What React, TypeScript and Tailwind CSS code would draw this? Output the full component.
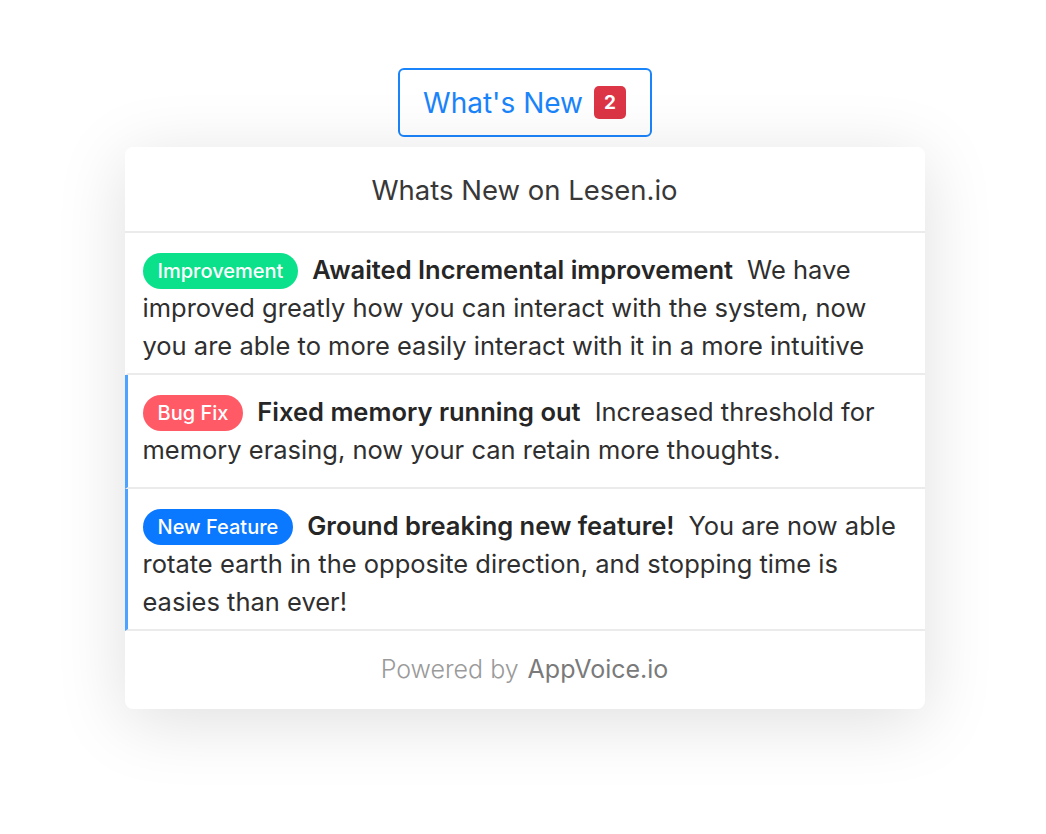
import React from 'react';

// "What's New" changelog popover

type Entry = {
  tag: string;
  tagClass: string;
  title: string;
  body: string;
  highlight: boolean;
};

const entries: Entry[] = [
  {
    tag: 'Improvement',
    tagClass: 'bg-[#0be08b]',
    title: 'Awaited Incremental improvement',
    body: 'We have improved greatly how you can interact with the system, now you are able to more easily interact with it in a more intuitive way than ever before.',
    highlight: false,
  },
  {
    tag: 'Bug Fix',
    tagClass: 'bg-[#ff5a66]',
    title: 'Fixed memory running out',
    body: 'Increased threshold for memory erasing, now your can retain more thoughts.',
    highlight: true,
  },
  {
    tag: 'New Feature',
    tagClass: 'bg-[#0a78ff]',
    title: 'Ground breaking new feature!',
    body: 'You are now able rotate earth in the opposite direction, and stopping time is easies than ever!',
    highlight: true,
  },
];

const App: React.FC = () => {
  return (
    <div className="min-h-screen bg-white flex flex-col items-center pt-[68px] pl-[3px] font-['Inter','Noto_Sans',sans-serif]">
      <button className="h-[69px] w-[254px] flex items-center justify-center gap-[11px] border-2 border-[#1a84fb] rounded-[6px] bg-white">
        <span className="text-[28px] text-[#1a84fb] leading-none">What's New</span>
        <span className="w-[32px] h-[33px] rounded-[5px] bg-[#dc3545] text-white text-[19px] font-bold flex items-center justify-center leading-none">
          2
        </span>
      </button>

      <div className="mt-[10px] w-[800px] bg-white rounded-[8px] overflow-hidden shadow-[0_12px_70px_rgba(0,0,0,0.13)]">
        <div className="h-[86px] pt-[3px] flex items-center justify-center text-[27.5px] text-[#383838] border-b-2 border-[#ebebeb]">
          Whats New on Lesen.io
        </div>

        {entries.map((e) => (
          <div
            key={e.tag}
            className={`max-h-[142px] overflow-hidden border-b-2 border-[#ebebeb] border-l-[3px] pl-[15px] pr-[18px] py-[18px] text-[25.5px] leading-[38px] text-[#2f2f2f] ${
              e.highlight ? 'border-l-[#4da3ff]' : 'border-l-white'
            }`}
          >
            <span
              className={`inline-block align-[1px] rounded-full px-[15px] h-[36px] leading-[36px] text-[20px] font-medium text-white mr-[14px] ${e.tagClass}`}
            >
              {e.tag}
            </span>
            <span className="font-semibold text-[#262626] mr-[14px]">{e.title}</span>
            <span>{e.body}</span>
          </div>
        ))}

        <div className="h-[78px] flex items-center justify-center text-[25px] gap-[9px]">
          <span className="font-light text-[#9a9a9a]">Powered by</span>
          <span className="text-[#7a7a7a]">AppVoice.io</span>
        </div>
      </div>
    </div>
  );
};

export default App;
